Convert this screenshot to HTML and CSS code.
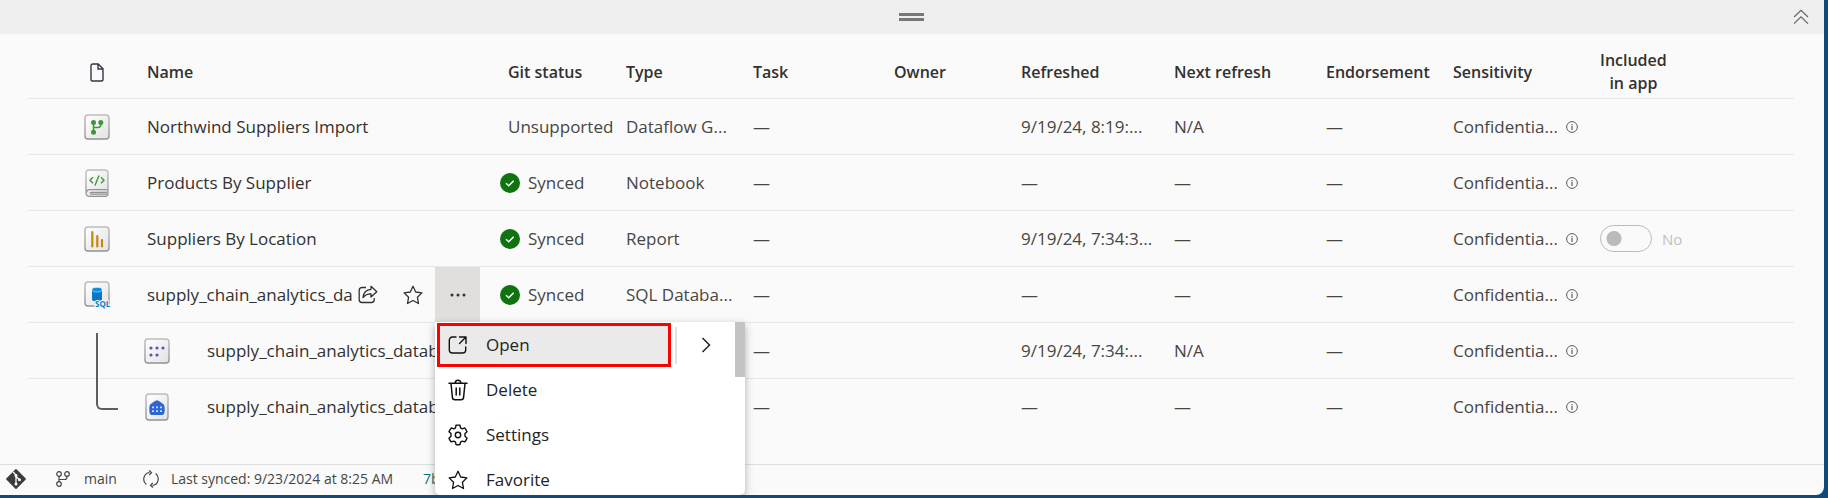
FILE: index.html
```html
<!DOCTYPE html>
<html lang="en">
<head>
<meta charset="utf-8">
<title>Workspace items</title>
<link rel="stylesheet" href="styles.css">
</head>
<body>
<svg class="defs" aria-hidden="true">
  <defs>
    <linearGradient id="tile" x1="0" y1="0" x2="1" y2="1"><stop offset="0" stop-color="#fff"/><stop offset="1" stop-color="#e2e2e2"/></linearGradient>
    <linearGradient id="edge" x1="0" y1="0" x2="0" y2="1"><stop offset="0" stop-color="#bdbdbd"/><stop offset="1" stop-color="#939393"/></linearGradient>
    <symbol id="info" viewBox="0 0 12 12"><circle cx="6" cy="6" r="5.4" fill="none" stroke="#605e5c"/><path d="M6 5v4M6 3v1.2" stroke="#605e5c" stroke-width="1.2"/></symbol>
    <symbol id="ok" viewBox="0 0 20 20"><circle cx="10" cy="10" r="10" fill="#107310"/><path d="M6 10.3l2.7 2.4 5-5" fill="none" stroke="#fff" stroke-width="1.5"/></symbol>
    <symbol id="star" viewBox="0 0 20 20"><path d="M10 1.3l2.7 5.7 6.2.9-4.5 4.3 1.1 6.3L10 15.5l-5.5 3 1.1-6.3L1.1 7.9 7.3 7z" fill="none" stroke="currentColor" stroke-width="1.3" stroke-linejoin="round"/></symbol>
  </defs>
</svg>
<main class="panel">
  <div class="topbar">
    <div class="grip"></div>
    <button class="collapse" aria-label="Collapse"><svg width="16" height="16" viewBox="0 0 16 16" fill="none" stroke="#666" stroke-width="1.2"><path d="M1 8l7-6.7L15 8M1 14.6l7-6.7 7 6.7"/></svg></button>
  </div>
  <div class="list">
  <table class="items">
    <colgroup><col class="c-icon"><col class="c-name"><col class="c-git"><col class="c-type"><col class="c-task"><col class="c-owner"><col class="c-ref"><col class="c-next"><col class="c-end"><col class="c-sens"><col></colgroup>
    <thead>
      <tr>
        <th class="icon"><svg width="14" height="19" viewBox="0 0 14 19" fill="none" stroke="#3b3245" stroke-width="1.4"><path d="M2.8 1h5.4l4.8 4.8v10.4a1.8 1.8 0 0 1-1.8 1.8H2.8A1.8 1.8 0 0 1 1 16.200V2.800A1.8 1.8 0 0 1 2.800 1zM8 1v5h5"/></svg></th>
        <th>Name</th><th class="git-head">Git status</th><th>Type</th><th>Task</th><th>Owner</th><th>Refreshed</th><th>Next refresh</th><th>Endorsement</th><th>Sensitivity</th><th><span class="included">Included<br>in app</span></th>
      </tr>
    </thead>
    <tbody>
      <tr>
        <td class="icon"><svg width="26" height="26" viewBox="0 0 26 26"><rect x="1" y="1" width="24" height="24" rx="3" fill="url(#tile)" stroke="url(#edge)" stroke-width="1.4"/><g fill="#3f9639"><circle cx="9.500" cy="8.500" r="2.500"/><circle cx="16.800" cy="8.500" r="2.500"/><circle cx="9.500" cy="18.300" r="2.500"/></g><path d="M9.500 8v10M16.800 8v2.500a3 3 0 0 1-3 3H9.500" fill="none" stroke="#3f9639" stroke-width="1.500"/></svg></td>
        <td class="name">Northwind Suppliers Import</td><td class="git-text">Unsupported</td><td>Dataflow G...</td><td>—</td><td></td><td>9/19/24, 8:19:...</td><td>N/A</td><td>—</td>
        <td><span class="sens">Confidentia...<svg width="12" height="12"><use href="#info"/></svg></span></td><td></td>
      </tr>
      <tr>
        <td class="icon"><svg width="26" height="28" viewBox="-1 0 26 28"><path d="M4 1h16a3 3 0 0 1 3 3v21a2.300 2.300 0 0 1-2.300 2.300H4.500A3.300 3.300 0 0 1 1 24V4a3 3 0 0 1 3-3z" fill="url(#tile)" stroke="url(#edge)" stroke-width="1.300"/><path d="M1.500 23.500a3 3 0 0 1 3-2.800H22.500M22 23.300H6a1 1 0 0 0-1 1M22.500 25.200H5" fill="none" stroke="#929292" stroke-width="1.200"/><path d="M8 8.200l-3 3 3 3M16 8.200l3 3-3 3M14 6.500l-4 10" fill="none" stroke="#3f9639" stroke-width="1.400"/></svg></td>
        <td class="name">Products By Supplier</td><td><span class="synced"><svg width="20" height="20"><use href="#ok"/></svg>Synced</span></td><td>Notebook</td><td>—</td><td></td><td>—</td><td>—</td><td>—</td>
        <td><span class="sens">Confidentia...<svg width="12" height="12"><use href="#info"/></svg></span></td><td></td>
      </tr>
      <tr>
        <td class="icon"><svg width="26" height="26" viewBox="0 0 26 26"><rect x="1" y="1" width="24" height="24" rx="3" fill="url(#tile)" stroke="url(#edge)" stroke-width="1.4"/><path d="M8.300 6v14.500M13.300 10v10.500M18 14v6.500" stroke="#c8850c" stroke-width="2.200" stroke-linecap="round"/></svg></td>
        <td class="name">Suppliers By Location</td><td><span class="synced"><svg width="20" height="20"><use href="#ok"/></svg>Synced</span></td><td>Report</td><td>—</td><td></td><td>9/19/24, 7:34:3...</td><td>—</td><td>—</td>
        <td><span class="sens">Confidentia...<svg width="12" height="12"><use href="#info"/></svg></span></td>
        <td><label class="toggle"><input type="checkbox" role="switch" disabled>No</label></td>
      </tr>
      <tr>
        <td class="icon"><svg class="sql" width="28" height="28" viewBox="0 0 28 28"><rect x="1" y="1" width="24" height="24" rx="3" fill="url(#tile)" stroke="url(#edge)" stroke-width="1.4"/><path d="M8 9v9.500c0 1.200 2.200 2 5 2s5-.8 5-2V9z" fill="#0878c4"/><ellipse cx="13" cy="8.700" rx="5" ry="2.300" fill="#0b8fe0" stroke="#cdeaff" stroke-width=".6"/><text x="11" y="26" class="sql-text">SQL</text></svg></td>
        <td class="name">
          <div class="row-actions">
            <span class="label">supply_chain_analytics_da</span>
            <button class="act share" aria-label="Share"><svg width="20" height="19" viewBox="0 0 20 19" fill="none" stroke="currentColor" stroke-width="1.300" stroke-linejoin="round"><path d="M8 2.500H4A2.800 2.800 0 0 0 1.200 5.300v9.400A2.800 2.800 0 0 0 4 17.500h9.400a2.800 2.800 0 0 0 2.800-2.800V13"/><path d="M13 1.300l5.800 5.400L13 12V8.800c-3.500-.1-5.800 1-8 3.700.4-4.500 3-7.800 8-8.200z"/></svg></button>
            <button class="act fav" aria-label="Favorite"><svg width="20" height="20"><use href="#star"/></svg></button>
            <div class="more-wrap">
              <button class="more" aria-label="More options" aria-expanded="true"><svg width="16" height="4" viewBox="0 0 16 4" fill="#323130"><circle cx="2" cy="2" r="1.500"/><circle cx="8" cy="2" r="1.500"/><circle cx="14" cy="2" r="1.500"/></svg></button>
              <div class="menu">
                <div class="menu-list">
                  <div class="split">
                    <button class="item open"><svg width="20" height="20" viewBox="0 0 20 20" fill="none" stroke="currentColor" stroke-width="1.400" stroke-linecap="round" stroke-linejoin="round"><path d="M8 2H4.500A3.200 3.200 0 0 0 1.300 5.200v9.600A3.200 3.200 0 0 0 4.500 18h10a3.200 3.200 0 0 0 3.200-3.200V12M11.500 2H18v6.500M18 2l-6.500 6.500"/></svg>Open</button>
                    <button class="sub" aria-label="Open options"><svg width="10" height="16" viewBox="0 0 10 16" fill="none" stroke="currentColor" stroke-width="1.500"><path d="M1.500 1l7 7-7 7"/></svg></button>
                  </div>
                  <button class="item"><svg width="20" height="22" viewBox="0 0 20 22" fill="none" stroke="currentColor" stroke-width="1.500" stroke-linecap="round"><path d="M1 4.200h18M7.200 4a2.800 2.800 0 0 1 5.600 0M3 4.500l1.400 13.700A2.600 2.600 0 0 0 7 20.700h6a2.600 2.600 0 0 0 2.600-2.500L17 4.500M8.200 9v7M11.800 9v7"/></svg>Delete</button>
                  <button class="item"><svg width="22" height="22" viewBox="0 0 22 22" fill="none" stroke="currentColor" stroke-width="1.400" stroke-linejoin="round"><circle cx="11" cy="11" r="2.700"/><path d="M9 1.300a10 10 0 0 1 4 0l.5 2.500 1.700 1 2.500-.9a10 10 0 0 1 2.300 3.800l-2 1.800v2.800l2 1.900a10 10 0 0 1-2.300 3.700l-2.500-.8-1.700 1-.5 2.500a10 10 0 0 1-4 0l-.5-2.500-1.700-1-2.500.8A10 10 0 0 1 2 14.200l2-1.900V9.500L2 7.700a10 10 0 0 1 2.300-3.800l2.500.9 1.700-1z"/></svg>Settings</button>
                  <button class="item"><svg width="20" height="20" viewBox="0 0 20 20"><use href="#star"/></svg>Favorite</button>
                </div>
                <div class="scroll"></div>
              </div>
            </div>
          </div>
        </td>
        <td><span class="synced"><svg width="20" height="20"><use href="#ok"/></svg>Synced</span></td><td>SQL Databa...</td><td>—</td><td></td><td>—</td><td>—</td><td>—</td>
        <td><span class="sens">Confidentia...<svg width="12" height="12"><use href="#info"/></svg></span></td><td></td>
      </tr>
      <tr>
        <td class="icon branch"></td>
        <td class="name"><span class="child"><svg width="26" height="26" viewBox="0 0 26 26"><rect x="1" y="1" width="24" height="24" rx="3" fill="url(#tile)" stroke="url(#edge)" stroke-width="1.4"/><g fill="#7048b8"><circle cx="7" cy="10" r="1.600"/><circle cx="13" cy="10" r="1.600"/><circle cx="19" cy="10" r="1.600"/><circle cx="7" cy="17" r="1.600"/><circle cx="13" cy="17" r="1.600"/></g></svg>supply_chain_analytics_databa</span></td><td></td><td></td><td>—</td><td></td><td>9/19/24, 7:34:...</td><td>N/A</td><td>—</td>
        <td><span class="sens">Confidentia...<svg width="12" height="12"><use href="#info"/></svg></span></td><td></td>
      </tr>
      <tr>
        <td class="icon"></td>
        <td class="name"><span class="child"><svg width="26" height="28" viewBox="0 0 26 28"><rect x="2" y="1" width="22" height="26" rx="3" fill="url(#tile)" stroke="url(#edge)" stroke-width="1.4"/><path d="M13 7.300c1 0 6 3.300 6.700 4.200.8 1 1 2.500 1 5 0 4-1 5.500-2.700 5.500H8c-1.700 0-2.700-1.500-2.700-5.500 0-2.500.2-4 1-5C7 10.600 12 7.300 13 7.300z" fill="#2d66d2"/><g fill="#c7dcff"><path d="M8 13.500h2v1.800H8zM12 13.500h2v1.800h-2zM16 13.500h2v1.800h-2zM8 17.300h2v1.800H8zM12 17.300h2v1.800h-2zM16 17.300h2v1.800h-2z"/></g></svg>supply_chain_analytics_databa</span></td><td></td><td></td><td>—</td><td></td><td>—</td><td>—</td><td>—</td>
        <td><span class="sens">Confidentia...<svg width="12" height="12"><use href="#info"/></svg></span></td><td></td>
      </tr>
    </tbody>
  </table>
  </div>
  <footer class="status">
    <svg width="20" height="20" viewBox="0 0 20 20"><path d="M10 .8L19.200 10 10 19.200.8 10z" fill="#3d3b39" stroke="#3d3b39" stroke-width="1.500" stroke-linejoin="round"/><path d="M7 3l3 3v9M10 7.500l3.200 3" fill="none" stroke="#fafafa" stroke-width="1.300"/><g fill="#fafafa"><circle cx="10" cy="6.500" r="1.500"/><circle cx="10" cy="15" r="1.500"/><circle cx="13.500" cy="10.700" r="1.500"/></g></svg>
    <svg class="fork" width="14" height="16" viewBox="0 0 14 16" fill="none" stroke="#484644" stroke-width="1.200"><circle cx="3" cy="3" r="2.300"/><circle cx="11" cy="3" r="2.300"/><circle cx="3" cy="13" r="2.300"/><path d="M3 5.300v5.400M11 5.300V6a2.500 2.500 0 0 1-2.500 2.500H3"/></svg>
    <span class="main-branch">main</span>
    <svg class="sync" width="16" height="18" viewBox="0 0 16 18" fill="none" stroke="#484644" stroke-width="1.200"><path d="M9.500 15.500a6.800 6.800 0 0 0 3.200-12M6.500 2.500a6.800 6.800 0 0 0-3.200 12M6 .5l2.500 2L6.300 5M10 17.500l-2.500-2L9.700 13"/></svg>
    <span>Last synced: 9/23/2024 at 8:25 AM</span>
    <a class="commit" href="#">7b</a>
  </footer>
</main>
</body>
</html>
```
FILE: styles.css
```css
* { box-sizing: border-box; }
body {
  margin: 0;
  background: #0f4a7a;
  font-family: "Segoe UI", "Open Sans", "Noto Sans", sans-serif;
  font-size: 17px;
  line-height: 24px;
  color: #484644;
}
button { border: 0; padding: 0; background: none; font: inherit; color: inherit; }
svg { display: block; flex: none; }
.defs { position: absolute; width: 0; height: 0; }
.panel {
  display: flex;
  flex-direction: column;
  min-height: calc(100vh - 3px);
  margin-right: 4px;
  background: #fafafa;
  border-bottom-right-radius: 8px;
}
.topbar {
  display: grid;
  grid-template-columns: 1fr auto 1fr;
  align-items: center;
  height: 34px;
  padding-right: 15px;
  padding-left: 13px;
  background: #efefef;
}
.grip { grid-column: 2; width: 25px; height: 8px; border: solid #7a7876; border-width: 3px 0; }
.collapse { justify-self: end; }
.list { flex: 1; padding: 0 30px 0 27px; }
.items { width: 100%; table-layout: fixed; border-collapse: separate; border-spacing: 0; }
.c-icon { width: 112px; }
.c-name { width: 353px; }
.c-git { width: 126px; }
.c-type { width: 127px; }
.c-task { width: 141px; }
.c-owner { width: 127px; }
.c-ref { width: 153px; }
.c-next { width: 152px; }
.c-end { width: 127px; }
.c-sens { width: 147px; }
th, td { padding: 0 0 0 8px; border-bottom: 1px solid #e8e8e8; text-align: left; white-space: nowrap; }
th { height: 65px; padding-top: 12px; font-weight: 600; font-size: 16px; color: #323130; }
td { height: 56px; }
tbody tr:last-child td { border-bottom: 0; }
.icon { position: relative; padding-left: 57px; }
th.icon svg { margin-left: 6px; }
.name { color: #323130; }
.git-head, .git-text { padding-left: 16px; }
.included { display: inline-block; text-align: center; line-height: 23px; }
.synced { display: flex; align-items: center; gap: 8px; }
.sens { display: flex; align-items: center; gap: 8px; }
.toggle { display: flex; align-items: center; gap: 10px; font-size: 15px; color: #c2c0be; }
.toggle input {
  appearance: none;
  width: 52px;
  height: 27px;
  margin: 0;
  border: 1px solid #bdbbb9;
  border-radius: 14px;
  background: radial-gradient(circle 8px at 13px 50%, #bdbbb9 7px, transparent 8px);
}
.sql { overflow: visible; }
.sql-text { font: 700 8px "Open Sans", sans-serif; fill: #0878c4; stroke: #fafafa; stroke-width: 2px; paint-order: stroke; }
.row-actions { display: flex; align-items: center; height: 55px; }
.label { flex: 1; }
.fav { margin-left: 25px; }
.more-wrap { position: relative; align-self: stretch; width: 45px; margin: 0 12px; }
.more { display: flex; align-items: center; justify-content: center; width: 100%; height: 100%; background: #e1dfdd; }
.menu {
  position: absolute;
  z-index: 2;
  top: 100%;
  left: 0;
  display: flex;
  width: 310px;
  height: 173px;
  overflow: hidden;
  background: #fff;
  border-radius: 0 0 5px 5px;
  box-shadow: 0 3px 8px rgba(0, 0, 0, .3);
  color: #242424;
}
.menu-list { flex: 1; display: flex; flex-direction: column; }
.scroll { width: 10px; height: 55px; background: #c4c4c4; }
.split { display: flex; align-items: center; padding: 1px 0 0 2px; }
.item { display: flex; flex: none; align-items: center; width: 100%; height: 45px; padding-left: 12px; text-align: left; }
.item svg { width: 22px; margin-right: 17px; color: #111; }
.item.open { width: 234px; height: 44px; padding-left: 7px; border: 3px solid #f00; background: #eaeaea; }
.sub { display: flex; align-items: center; justify-content: center; flex: 1; height: 37px; margin-left: 4px; border-left: 2px solid #e1e1e1; }
.branch::after {
  content: "";
  position: absolute;
  top: 10px;
  left: 69px;
  width: 20px;
  height: 75px;
  border: solid #605e5c;
  border-width: 0 0 2px 2px;
  border-bottom-left-radius: 6px;
}
.child { display: flex; align-items: center; gap: 37px; margin-left: -3px; }
.status {
  display: flex;
  align-items: center;
  height: 31px;
  padding-left: 6px;
  padding-bottom: 2px;
  border-top: 1px solid #dedede;
  font-size: 14px;
  line-height: 20px;
}
.fork { margin-left: 30px; }
.main-branch { margin-left: 14px; }
.sync { margin: 0 12px 0 26px; }
.commit { margin-left: 30px; color: #117865; text-decoration: none; }
```
